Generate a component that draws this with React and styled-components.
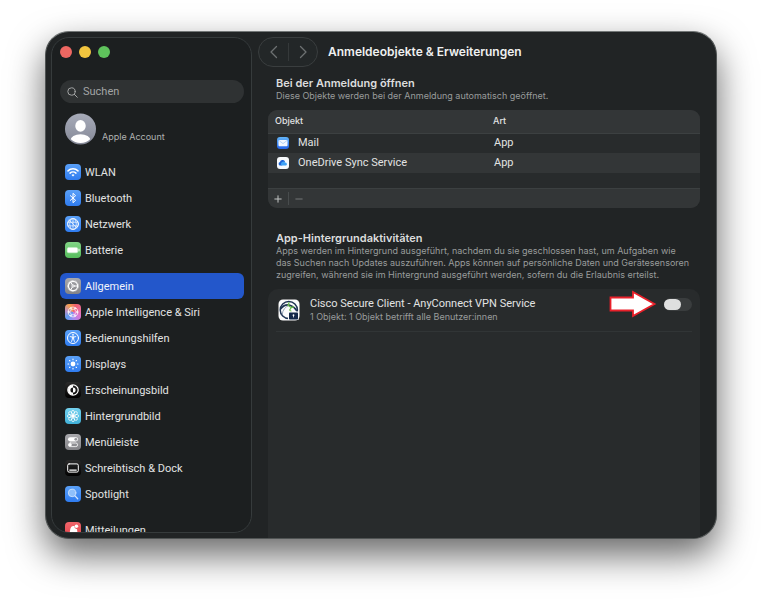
import React from 'react'
import styled, {createGlobalStyle} from 'styled-components'

const GlobalStyle = createGlobalStyle`
	*{
		box-sizing: border-box;
	}
	body{
		margin: 0;
		background: #fff;
		color: #e2e3e3;
		font: 11px/14px Roboto, "Liberation Sans", sans-serif;
	}
	button, input{
		margin: 0;
		padding: 0;
		border: 0;
		background: none;
		color: inherit;
		font: inherit;
	}
	h1, h2, p, ul{
		margin: 0;
		padding: 0;
	}
	svg{
		display: block;
		flex: none;
	}
`

const INTER = 'Inter, "Liberation Sans", sans-serif'

const Desktop = styled.div`
	display: flex;
	height: 100vh;
	min-height: 360px;
	padding: 31px 45px 60px;
	overflow: hidden;
`

const Window = styled.div`
	display: flex;
	flex: 1;
	min-width: 0;
	padding: 5px 0 0 5px;
	overflow: hidden;
	border: 1px solid #505454;
	border-top-color: #737777;
	border-radius: 24px;
	background: #212425;
	box-shadow: 0 16px 36px rgba(0, 0, 0, 0.6);
`

const Sidebar = styled.aside`
	display: flex;
	flex: none;
	flex-direction: column;
	width: 201px;
	margin-bottom: 5px;
	padding: 8px 7px 0 8px;
	overflow: hidden;
	border: 1px solid #363b3c;
	border-radius: 18px;
	background: #1c1f20;
`

const Lights = styled.div`
	display: flex;
	flex: none;
	gap: 7px;
	margin-bottom: 22px;
`

const Light = styled.button`
	width: 12px;
	height: 12px;
	border-radius: 50%;
	background: ${p => p.$color};
`

const Search = styled.label`
	display: flex;
	flex: none;
	align-items: center;
	gap: 5px;
	height: 23px;
	padding: 1px 7px 0;
	border-radius: 12px;
	background: #2f3233;
	color: #a3a5a5;

	input{
		flex: 1;
		min-width: 0;
		outline: 0;
	}
	input::placeholder{
		color: #a3a5a5;
		opacity: 1;
	}
`

const Account = styled.a`
	display: flex;
	flex: none;
	align-items: flex-end;
	gap: 6px;
	margin: 10px 5px 14px;
	color: #b0b2b2;
	font-family: ${INTER};
	font-size: 9px;
	line-height: 17px;
	text-decoration: none;
`

const NavGroup = styled.ul`
	flex: none;
	margin-bottom: 10px;
	list-style: none;
`

const NavLink = styled.a`
	display: flex;
	align-items: center;
	gap: 4px;
	height: 26px;
	padding: 0 5px;
	border-radius: 6px;
	background: ${p => p.$active ? '#2357cb' : 'none'};
	color: ${p => p.$active ? '#f1f4fb' : '#e2e3e3'};
	line-height: 16px;
	text-decoration: none;
	white-space: nowrap;
`

const NavLabel = styled.span`
	padding-top: 1px;
`

const Tile = styled.span`
	flex: none;
	width: 16px;
	height: 16px;
	overflow: hidden;
	border-radius: 4px;
	background: ${p => p.$fill};
	color: #fff;
`

const Main = styled.main`
	display: flex;
	flex: 1;
	flex-direction: column;
	min-width: 0;
`

const Toolbar = styled.header`
	display: flex;
	flex: none;
	align-items: center;
	gap: 10px;
	padding-left: 6px;

	h1{
		color: #eff0f0;
		font-family: ${INTER};
		font-size: 12px;
		font-weight: 600;
		line-height: 18px;
	}
`

const History = styled.div`
	display: flex;
	align-items: center;
	height: 30px;
	border: 1px solid #3a3e3f;
	border-radius: 15px;
	background: #232728;
	color: #6d7172;

	button{
		display: flex;
		align-items: center;
		justify-content: center;
		width: 29px;
		height: 18px;
	}
	button + button{
		border-left: 1px solid #35393a;
	}
`

const Content = styled.div`
	display: flex;
	flex: 1;
	flex-direction: column;
	min-height: 0;
	padding: 9px 16px 0;
`

const Intro = styled.div`
	flex: none;
	padding: 0 8px;
	margin-bottom: 8px;

	h2{
		color: #dcdddd;
		font-family: ${INTER};
		font-size: 11px;
		font-weight: 600;
		line-height: 14px;
	}
	p{
		color: #999c9c;
		font-family: ${INTER};
		font-size: 9px;
		line-height: 12px;
	}
`

const ListBox = styled.section`
	flex: none;
	margin-bottom: 23px;
	overflow: hidden;
	border-radius: 9px;
	background: #282b2c;
`

const Table = styled.table`
	width: 100%;
	table-layout: fixed;
	border-collapse: collapse;
	text-align: left;

	th{
		height: 23px;
		padding: 0 7px;
		border-bottom: 1px solid #3c4041;
		background: #333637;
		font-family: ${INTER};
		font-size: 9px;
		font-weight: 500;
	}
	th:first-child{
		width: 218px;
	}
	td{
		height: 20px;
		padding: 0 8px;
	}
	tbody tr:nth-child(even){
		background: #333637;
	}
`

const Item = styled.span`
	display: flex;
	align-items: center;
	gap: 8px;
`

const ListFooter = styled.div`
	display: flex;
	align-items: center;
	height: 20px;
	margin-top: 15px;
	border-top: 1px solid #3c4041;
	background: #333637;

	button{
		display: flex;
		align-items: center;
		justify-content: center;
		width: 20px;
		height: 13px;
		color: #c3c5c5;
	}
	button + button{
		border-left: 1px solid #484c4d;
		color: #747778;
	}
`

const Activities = styled.section`
	flex: 1;
	min-height: 0;
	padding: 0 8px;
	border-radius: 10px 10px 0 0;
	background: #282b2c;
`

const Activity = styled.div`
	display: flex;
	align-items: flex-start;
	height: 43px;
	padding: 1px 0 0 2px;
	border-bottom: 1px solid #313536;
`

const AppIcon = styled.div`
	padding-top: 9px;
`

const ActivityText = styled.div`
	flex: 1;
	min-width: 0;
	padding: 7px 0 0 10px;
	line-height: 14px;

	p{
		color: #999c9c;
		font-family: ${INTER};
		font-size: 9px;
		line-height: 12px;
	}
`

const Control = styled.div`
	display: flex;
	align-items: center;
	gap: 7px;
`

const Switch = styled.input`
	display: flex;
	align-items: center;
	width: 28px;
	height: 13px;
	appearance: none;
	border-radius: 7px;
	background: #3a3d3e;

	&::before{
		content: '';
		width: 17px;
		height: 11px;
		border-radius: 6px;
		background: #dedfdf;
	}
	&:checked{
		justify-content: flex-end;
		background: #2357cb;
	}
`

const BLUE = 'linear-gradient(#5aa0f7, #2f7cf0)'
const BLACK = 'linear-gradient(#2b2b2b, #000)'
const GREY = 'linear-gradient(#a9a9ad, #838387)'

const Glyph = ({size = 16, box = 16, children}) => (
  <svg width={size} height={size} viewBox={`0 0 ${box} ${box}`} fill="none" stroke="currentColor" strokeLinecap="round" strokeLinejoin="round" aria-hidden="true">
    {children}
  </svg>
)

const turns = count => Array.from({length: count}, (_, i) => i * 360 / count)

const Wifi = () => <Glyph>
  <path d="M3 6.9a7.1 7.1 0 0 1 10 0M5 9.1a4.3 4.3 0 0 1 6 0" strokeWidth="1.5"/>
  <path d="M6.5 10.9a2.2 2.2 0 0 1 3 0L8 12.5z" fill="currentColor" stroke="none"/>
</Glyph>

const Bluetooth = () => <Glyph>
  <path d="M5.3 5.6l5.3 4.7L8 12.7V3.3l2.6 2.4-5.3 4.7" strokeWidth="1"/>
</Glyph>

const Globe = () => <Glyph>
  <circle cx="8" cy="8" r="5.4" strokeWidth="1"/>
  <path d="M2.9 6.2h10.2M2.9 9.9h10.2M8 2.6v10.8M6.5 2.9c-2.4 3.3-2.4 6.9 0 10.2M9.5 2.9c2.4 3.3 2.4 6.9 0 10.2M4 4.3l8 7.4" strokeWidth=".7"/>
</Glyph>

const Battery = () => <Glyph>
  <rect x="2.2" y="5.4" width="10.6" height="5.4" rx="1.5" fill="currentColor" stroke="#c8efca" strokeWidth=".5"/>
  <path d="M14 7.2v1.8" strokeWidth="1"/>
</Glyph>

const Gear = () => <Glyph>
  <circle cx="8" cy="8" r="4.6" strokeWidth="1.2"/>
  <circle cx="8" cy="8" r="5.5" strokeWidth=".8" strokeDasharray=".7 .74" strokeLinecap="butt"/>
  <circle cx="8" cy="8" r="1.2" strokeWidth=".8"/>
  <path d="M9.2 8h3.2M7.4 7L5.7 4.1M7.4 9l-1.7 2.9" strokeWidth="1"/>
</Glyph>

const Intelligence = () => <Glyph>
  {turns(6).map(a => <ellipse key={a} cx="8" cy="4.2" rx="2.6" ry="1.1" strokeWidth=".7" transform={`rotate(${a} 8 8)`}/>)}
</Glyph>

const Accessibility = () => <Glyph>
  <circle cx="8" cy="8" r="5.5" strokeWidth="1"/>
  <circle cx="8" cy="4.8" r=".9" fill="currentColor" stroke="none"/>
  <path d="M5.2 6.6l2 .4h1.6l2-.4M7.3 7l.1 2-.8 2.5M8.7 7l-.1 2 .8 2.5M8 7v1.8" strokeWidth=".9"/>
</Glyph>

const Sun = () => <Glyph>
  <circle cx="8" cy="8" r="2.4" fill="currentColor" stroke="none"/>
  {turns(8).map(a => <path key={a} d="M8 3.7v-.7" strokeWidth="1.1" transform={`rotate(${a} 8 8)`}/>)}
</Glyph>

const Appearance = () => <Glyph>
  <circle cx="8" cy="8" r="5.2" strokeWidth="1.2"/>
  <path d="M8 3a5 5 0 0 0 0 10v-2.4a2.6 2.6 0 0 1 0-5.2z" fill="currentColor" stroke="none"/>
  <path d="M8 5.4a2.6 2.6 0 0 1 0 5.2z" fill="currentColor" stroke="none"/>
</Glyph>

const Flower = () => <Glyph>
  {turns(8).map(a => <ellipse key={a} cx="8" cy="4.4" rx="1.5" ry="2.1" strokeWidth=".7" transform={`rotate(${a} 8 8)`}/>)}
  <circle cx="8" cy="8" r="1.4" fill="currentColor" stroke="none"/>
</Glyph>

const Switches = () => <Glyph>
  <rect x="3" y="3.2" width="10" height="4.2" rx="2.1" fill="currentColor" stroke="none"/>
  <circle cx="10.8" cy="5.3" r="1.4" fill="#96969a" stroke="none"/>
  <rect x="3.4" y="9" width="9.2" height="3.6" rx="1.8" strokeWidth=".8"/>
  <circle cx="5.2" cy="10.8" r="1.6" fill="currentColor" stroke="none"/>
</Glyph>

const Dock = () => <Glyph>
  <rect x="2.7" y="3.9" width="10.6" height="8.2" rx="1.4" strokeWidth="1"/>
  <path d="M4.8 10.1h6.4" strokeWidth="1.4"/>
</Glyph>

const Spotlight = () => <Glyph>
  <circle cx="7.1" cy="6.9" r="3.8" fill="#8fc0fb" stroke="#d3e6fe" strokeWidth=".8"/>
  <path d="M10 9.9l2.7 2.8" stroke="#d3e6fe" strokeWidth="1.3"/>
</Glyph>

const Bell = () => <Glyph>
  <path d="M4.2 11.4c1.3-1.6.4-4.6 2-6.4 1-1.1 2.3-1.1 3-.9.2 2 1.2 3 2.9 3.1 0 1.8.2 2.8 1 4.2z" fill="currentColor" stroke="none"/>
  <circle cx="11.4" cy="4.3" r="1.8" fill="currentColor" stroke="none"/>
</Glyph>

const Avatar = () => (
  <svg width="31" height="32" viewBox="0 0 32 32" aria-hidden="true">
    <defs>
      <linearGradient id="avatar" x1="0" y1="0" x2="0" y2="1">
        <stop offset="0" stopColor="#a7abb9"/>
        <stop offset="1" stopColor="#858997"/>
      </linearGradient>
      <clipPath id="avatar-clip"><circle cx="16" cy="16" r="14.5"/></clipPath>
    </defs>
    <circle cx="16" cy="16" r="16" fill="url(#avatar)"/>
    <ellipse cx="16" cy="12.8" rx="5.4" ry="6" fill="#fff"/>
    <ellipse cx="16" cy="28" rx="10.4" ry="6.6" fill="#fff" clipPath="url(#avatar-clip)"/>
  </svg>
)

const MailIcon = () => (
  <svg width="14" height="14" viewBox="0 0 14 14" aria-hidden="true">
    <defs>
      <linearGradient id="mail" x1="0" y1="0" x2="0" y2="1">
        <stop offset="0" stopColor="#62b4f8"/>
        <stop offset="1" stopColor="#2565ea"/>
      </linearGradient>
    </defs>
    <rect x="1" y="1" width="12" height="12" rx="3" fill="url(#mail)"/>
    <rect x="2.5" y="4" width="9" height="6.2" rx="1" fill="#f3f8ff"/>
    <path d="M2.8 4.4L7 7.6l4.2-3.2" fill="none" stroke="#9bc3f5" strokeWidth=".7"/>
  </svg>
)

const OneDriveIcon = () => (
  <svg width="14" height="14" viewBox="0 0 14 14" aria-hidden="true">
    <rect x="1" y="1" width="12" height="12" rx="3" fill="#f6f9fc"/>
    <path d="M4.3 9.6a1.9 1.9 0 0 1-.4-3.7A2.8 2.8 0 0 1 9 5.5l-3 4.1z" fill="#1c62d6"/>
    <path d="M5.5 9.6a2.3 2.3 0 0 1 3.6-3.2 1.7 1.7 0 0 1 .9 3.2z" fill="#3fa2f5"/>
  </svg>
)

const CiscoIcon = () => (
  <svg width="22" height="22" viewBox="0 0 22 22" aria-hidden="true">
    <rect x=".5" y=".5" width="21" height="21" rx="4.5" fill="#fbfcfc"/>
    <circle cx="10.8" cy="11" r="8.6" fill="none" stroke="#1f3454" strokeWidth="1.5"/>
    <path d="M2.6 10C5.5 6.2 9 5.2 12.5 6.4c3 1 5 3 6.3 5.4" fill="none" stroke="#1f3454" strokeWidth="1.6"/>
    <path d="M4.2 15.5C4.7 11 7 8 11 6.4" fill="none" stroke="#7d8fa5" strokeWidth=".8"/>
    <path d="M11.3 3.2l-1.3 3 3.2 2.4-1.7 2.7M13.2 8.6l2.8-1M11.5 11.3l2 1.2" fill="none" stroke="#6abf4b" strokeWidth="1.2"/>
    <rect x="10" y="12.5" width="10.5" height="8.5" fill="#fbfcfc"/>
    <rect x="11" y="13.5" width="9" height="7" rx=".8" fill="#14294a"/>
    <circle cx="15.5" cy="16.2" r=".9" fill="#fff"/>
    <path d="M15.5 16v2.4" stroke="#fff" strokeWidth=".8"/>
  </svg>
)

const Arrow = () => (
  <svg width="48" height="28" viewBox="0 0 48 28" aria-hidden="true">
    <path d="M1.5 7.5H24V2l21.500 12L24 26v-5.500H1.500z" fill="#fff" stroke="#e9202a" strokeWidth="1.8"/>
  </svg>
)

const GROUPS = [
  [
    {label: 'WLAN', icon: Wifi, fill: BLUE},
    {label: 'Bluetooth', icon: Bluetooth, fill: BLUE},
    {label: 'Netzwerk', icon: Globe, fill: BLUE},
    {label: 'Batterie', icon: Battery, fill: 'linear-gradient(#82d486, #56bd5c)'}
  ],
  [
    {label: 'Allgemein', icon: Gear, fill: GREY, active: true},
    {label: 'Apple Intelligence & Siri', icon: Intelligence, fill: 'conic-gradient(from 330deg, #f7a14e, #f0616d, #ee6d9c, #d876d5, #a58cf0, #5f9df2, #b58cc4, #f7a14e)'},
    {label: 'Bedienungshilfen', icon: Accessibility, fill: BLUE},
    {label: 'Displays', icon: Sun, fill: BLUE},
    {label: 'Erscheinungsbild', icon: Appearance, fill: BLACK},
    {label: 'Hintergrundbild', icon: Flower, fill: 'linear-gradient(#74d2ef, #41b1d9)'},
    {label: 'Menüleiste', icon: Switches, fill: GREY},
    {label: 'Schreibtisch & Dock', icon: Dock, fill: BLACK},
    {label: 'Spotlight', icon: Spotlight, fill: BLUE}
  ],
  [
    {label: 'Mitteilungen', icon: Bell, fill: 'linear-gradient(#f0646a, #e2434a)'}
  ]
]

const LOGIN_ITEMS = [
  {name: 'Mail', kind: 'App', icon: MailIcon},
  {name: 'OneDrive Sync Service', kind: 'App', icon: OneDriveIcon}
]

const Navigation = () => <nav>
  {GROUPS.map((group, i) => <NavGroup key={i}>
    {group.map(({label, icon: Icon, fill, active}) => <li key={label}>
      <NavLink href="#" $active={active} aria-current={active ? 'page' : undefined}>
        <Tile $fill={fill}><Icon/></Tile>
        <NavLabel>{label}</NavLabel>
      </NavLink>
    </li>)}
  </NavGroup>)}
</nav>

const LoginItems = () => <ListBox>
  <Table>
    <thead>
      <tr><th scope="col">Objekt</th><th scope="col">Art</th></tr>
    </thead>
    <tbody>
      {LOGIN_ITEMS.map(({name, kind, icon: Icon}) => <tr key={name}>
        <td><Item><Icon/>{name}</Item></td>
        <td>{kind}</td>
      </tr>)}
    </tbody>
  </Table>
  <ListFooter>
    <button type="button" aria-label="Hinzufügen"><Glyph size={8} box={8}><path d="M4 .8v6.4M.8 4h6.4"/></Glyph></button>
    <button type="button" aria-label="Entfernen"><Glyph size={8} box={8}><path d="M.8 4h6.4"/></Glyph></button>
  </ListFooter>
</ListBox>

const App = () => <Desktop>
  <GlobalStyle/>
  <Window>
    <Sidebar>
      <Lights>
        <Light type="button" aria-label="Schließen" $color="#ee6762"/>
        <Light type="button" aria-label="Minimieren" $color="#f2c53f"/>
        <Light type="button" aria-label="Zoomen" $color="#5fc35c"/>
      </Lights>
      <Search>
        <Glyph size={11} box={11}><circle cx="4.5" cy="4.5" r="3.7"/><path d="M7.3 7.3l3 3"/></Glyph>
        <input type="search" placeholder="Suchen" aria-label="Suchen"/>
      </Search>
      <Account href="#"><Avatar/>Apple Account</Account>
      <Navigation/>
    </Sidebar>
    <Main>
      <Toolbar>
        <History>
          <button type="button" aria-label="Zurück"><Glyph size={14} box={14}><path d="M9.5 1.5L4 7l5.5 5.5" strokeWidth="1.3"/></Glyph></button>
          <button type="button" aria-label="Vorwärts"><Glyph size={14} box={14}><path d="M4.5 1.5L10 7l-5.5 5.5" strokeWidth="1.3"/></Glyph></button>
        </History>
        <h1>Anmeldeobjekte & Erweiterungen</h1>
      </Toolbar>
      <Content>
        <Intro>
          <h2>Bei der Anmeldung öffnen</h2>
          <p>Diese Objekte werden bei der Anmeldung automatisch geöffnet.</p>
        </Intro>
        <LoginItems/>
        <Intro>
          <h2>App-Hintergrundaktivitäten</h2>
          <p>Apps werden im Hintergrund ausgeführt, nachdem du sie geschlossen hast, um Aufgaben wie das Suchen nach Updates auszuführen. Apps können auf persönliche Daten und Gerätesensoren zugreifen, während sie im Hintergrund ausgeführt werden, sofern du die Erlaubnis erteilst.</p>
        </Intro>
        <Activities>
          <Activity>
            <AppIcon><CiscoIcon/></AppIcon>
            <ActivityText>
              <label htmlFor="cisco">Cisco Secure Client - AnyConnect VPN Service</label>
              <p>1 Objekt: 1 Objekt betrifft alle Benutzer:innen</p>
            </ActivityText>
            <Control>
              <Arrow/>
              <Switch id="cisco" type="checkbox"/>
            </Control>
          </Activity>
        </Activities>
      </Content>
    </Main>
  </Window>
</Desktop>

export default App
